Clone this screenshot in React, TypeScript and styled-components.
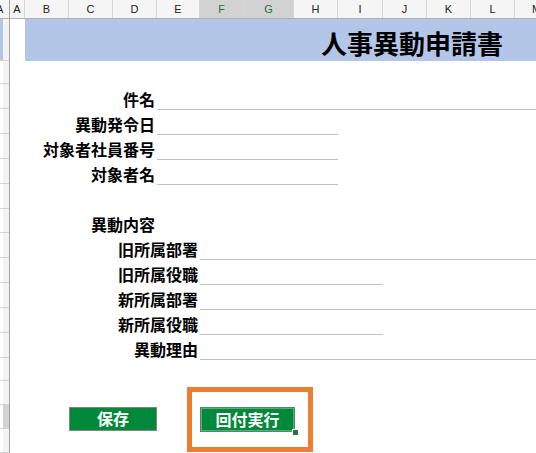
import React from "react";
import styled, { createGlobalStyle } from "styled-components";

const COLS = "15px 44px 44px 44px 43px 44px 50px 44px 45px 44px 44px 44px 44px";
const LETTERS = ["A", "B", "C", "D", "E", "F", "G", "H", "I", "J", "K", "L", "M"];
const SELECTED = ["F", "G"];

type FormRow = {
  h: number;
  label?: string;
  labelEnd?: number;
  line?: [number, number];
};

// 1-indexed grid columns: A=1 ... M=13, 14 = end
const FORM_ROWS: FormRow[] = [
  { h: 24 },
  { h: 25, label: "件名", labelEnd: 5, line: [5, 14] },
  { h: 25, label: "異動発令日", labelEnd: 5, line: [5, 9] },
  { h: 25, label: "対象者社員番号", labelEnd: 5, line: [5, 9] },
  { h: 25, label: "対象者名", labelEnd: 5, line: [5, 9] },
  { h: 25 },
  { h: 25, label: "異動内容", labelEnd: 5 },
  { h: 25, label: "旧所属部署", labelEnd: 6, line: [6, 14] },
  { h: 25, label: "旧所属役職", labelEnd: 6, line: [6, 10] },
  { h: 25, label: "新所属部署", labelEnd: 6, line: [6, 14] },
  { h: 25, label: "新所属役職", labelEnd: 6, line: [6, 10] },
  { h: 25, label: "異動理由", labelEnd: 6, line: [6, 14] },
];

const TAIL_ROWS = [24, 24, 24, 24];
const SELECTED_TAIL = 2;

const GlobalStyle = createGlobalStyle`
  html, body {
    margin: 0;
    padding: 0;
    background: #fff;
  }
  body {
    width: 536px;
    height: 453px;
    overflow: hidden;
    font-family: "Noto Sans CJK JP", "Noto Sans", sans-serif;
    color: #000;
  }
`;

const Window = styled.div`
  display: flex;
  width: 536px;
  height: 453px;
  overflow: hidden;
  background: #fff;
`;

const RowHeaderPane = styled.div`
  flex: none;
  width: 9px;
  display: flex;
  flex-direction: column;
  border-right: 1px solid #a3a3a3;
`;

const Corner = styled.div`
  height: 18px;
  border-bottom: 1px solid #b1b1b1;
  background: #f5f5f5;
  overflow: hidden;
  font: 11px/18px "Liberation Sans", Arial, sans-serif;
  color: #222;
  white-space: nowrap;

  span {
    margin-left: -4px;
  }
`;

const RowNum = styled.div<{ $h: number; $tone?: "band" | "selected" }>`
  box-sizing: border-box;
  height: ${(p) => p.$h}px;
  border-bottom: 1px solid #d4d4d4;
  background: ${(p) =>
    p.$tone === "band"
      ? "linear-gradient(to right, #b4c6e7 3px, #f3f3f3 3px)"
      : p.$tone === "selected"
      ? "linear-gradient(to right, #fff 3px, #d2d2d2 3px)"
      : "linear-gradient(to right, #fff 3px, #f3f3f3 3px)"};
`;

const Sheet = styled.div`
  flex: 1;
  display: flex;
  flex-direction: column;
  min-width: 0;
  overflow: hidden;
`;

const HeaderRow = styled.div`
  display: grid;
  grid-template-columns: ${COLS};
  height: 18px;
  border-bottom: 1px solid #b1b1b1;
  background: #f5f5f5;
`;

const ColHead = styled.div<{ $sel?: boolean }>`
  box-sizing: border-box;
  display: flex;
  align-items: center;
  justify-content: center;
  border-right: 1px solid #d6d6d6;
  background: ${(p) => (p.$sel ? "#d2d2d2" : "transparent")};
  color: ${(p) => (p.$sel ? "#217346" : "#222")};
  font: 11px "Liberation Sans", Arial, sans-serif;
`;

const Row = styled.div<{ $h: number }>`
  display: grid;
  grid-template-columns: ${COLS};
  height: ${(p) => p.$h}px;
`;

const TitleBand = styled.div`
  grid-column: 2 / -1;
  display: flex;
  justify-content: flex-end;
  align-items: flex-end;
  padding: 0 56px 5px 0;
  background: #b4c6e7;
  font-size: 26px;
  font-weight: 700;
  line-height: 1;
  white-space: nowrap;
`;

const Label = styled.div<{ $end: number }>`
  grid-column: 1 / ${(p) => p.$end};
  align-self: end;
  padding: 0 2px 3px 0;
  text-align: right;
  font-size: 16px;
  font-weight: 700;
  line-height: 1;
  white-space: nowrap;
`;

const Blank = styled.div<{ $from: number; $to: number }>`
  grid-column: ${(p) => p.$from} / ${(p) => p.$to};
  grid-row: 1;
  border-bottom: 1px solid #bfbfbf;
`;

const ButtonArea = styled.div`
  display: flex;
  align-items: flex-start;
  padding-left: 59px;
`;

const Highlight = styled.div`
  margin: 27px 0 0 30px;
  padding: 15px 13px 15px 8px;
  border: 5px solid #ed7d31;
`;

const Selection = styled.div`
  position: relative;
`;

const FillHandle = styled.span`
  position: absolute;
  right: -3px;
  bottom: -3px;
  width: 5px;
  height: 5px;
  background: #217346;
  outline: 1px solid #fff;
`;

const ShapeButton = styled.button<{ $w: number; $h: number; $top?: number; $active?: boolean }>`
  box-sizing: border-box;
  display: flex;
  align-items: center;
  justify-content: center;
  width: ${(p) => p.$w}px;
  height: ${(p) => p.$h}px;
  margin-top: ${(p) => p.$top ?? 0}px;
  padding: 0 0 2px;
  border: 1px solid ${(p) => (p.$active ? "#4f8a66" : "#858585")};
  box-shadow: ${(p) => (p.$active ? "inset 0 0 0 1px #5da87a" : "none")};
  background: #00883b;
  color: #fff;
  font-family: "Noto Sans CJK JP", sans-serif;
  font-size: 16px;
  font-weight: 700;
  line-height: 1;
  cursor: pointer;
`;

export default function App() {
  return (
    <>
      <GlobalStyle />
      <Window>
        <RowHeaderPane>
          <Corner>
            <span>A</span>
          </Corner>
          <RowNum $h={42} $tone="band" />
          {FORM_ROWS.map((r, i) => (
            <RowNum key={i} $h={r.h} />
          ))}
          {TAIL_ROWS.map((h, i) => (
            <RowNum key={`t${i}`} $h={h} $tone={i === SELECTED_TAIL ? "selected" : undefined} />
          ))}
        </RowHeaderPane>

        <Sheet>
          <HeaderRow>
            {LETTERS.map((l) => (
              <ColHead key={l} $sel={SELECTED.includes(l)}>
                {l}
              </ColHead>
            ))}
          </HeaderRow>

          <Row $h={42}>
            <TitleBand>人事異動申請書</TitleBand>
          </Row>

          {FORM_ROWS.map((r, i) => (
            <Row key={i} $h={r.h}>
              {r.label && <Label $end={r.labelEnd ?? 5}>{r.label}</Label>}
              {r.line && <Blank $from={r.line[0]} $to={r.line[1]} />}
            </Row>
          ))}

          <ButtonArea>
            <ShapeButton $w={88} $h={24} $top={47}>
              保存
            </ShapeButton>
            <Highlight>
              <Selection>
                <ShapeButton $w={95} $h={25} $active>
                  回付実行
                </ShapeButton>
                <FillHandle />
              </Selection>
            </Highlight>
          </ButtonArea>
        </Sheet>
      </Window>
    </>
  );
}
